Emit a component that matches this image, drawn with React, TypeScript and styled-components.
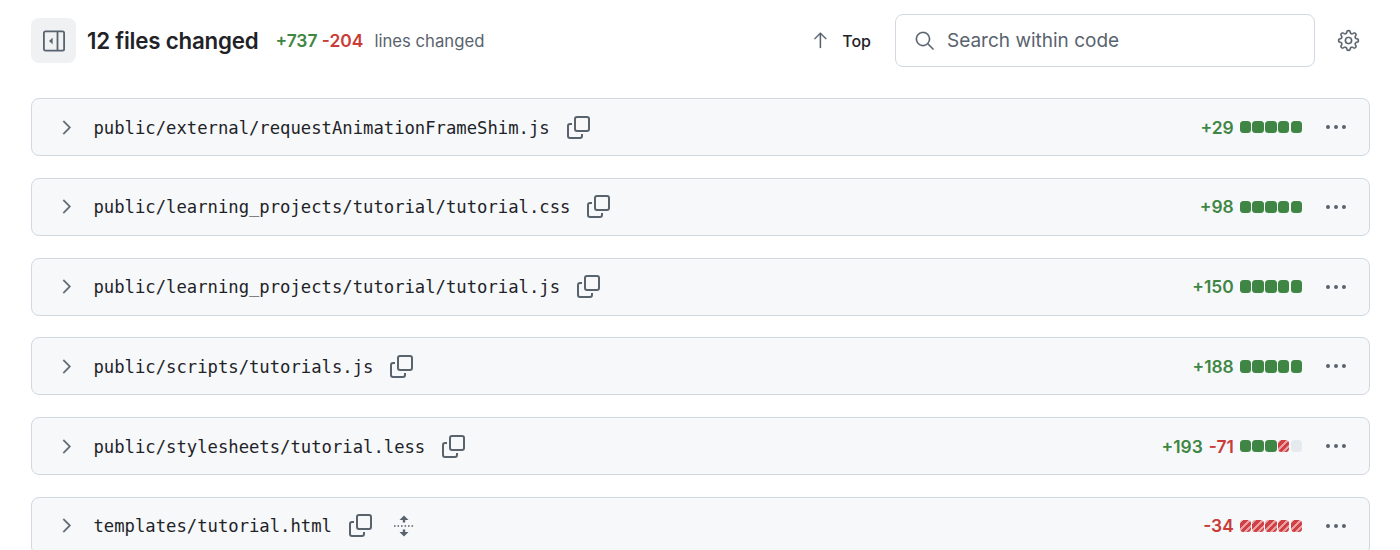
import React from "react"
import styled, { createGlobalStyle } from "styled-components"
import {
  GoArrowUp,
  GoChevronRight,
  GoGear,
  GoKebabHorizontal,
  GoSearch,
} from "react-icons/go"

type BlockKind = "add" | "del" | "none"

interface FileEntry {
  path: string
  added?: number
  removed?: number
  blocks: BlockKind[]
  movable?: boolean
}

const files: FileEntry[] = [
  {
    path: "public/external/requestAnimationFrameShim.js",
    added: 29,
    blocks: ["add", "add", "add", "add", "add"],
  },
  {
    path: "public/learning_projects/tutorial/tutorial.css",
    added: 98,
    blocks: ["add", "add", "add", "add", "add"],
  },
  {
    path: "public/learning_projects/tutorial/tutorial.js",
    added: 150,
    blocks: ["add", "add", "add", "add", "add"],
  },
  {
    path: "public/scripts/tutorials.js",
    added: 188,
    blocks: ["add", "add", "add", "add", "add"],
  },
  {
    path: "public/stylesheets/tutorial.less",
    added: 193,
    removed: 71,
    blocks: ["add", "add", "add", "del", "none"],
  },
  {
    path: "templates/tutorial.html",
    removed: 34,
    blocks: ["del", "del", "del", "del", "del"],
    movable: true,
  },
]

const SidebarGlyph = () => (
  <svg width="24" height="24" viewBox="0 0 24 24" fill="none">
    <rect x="1.9" y="2.4" width="20.2" height="19.2" rx="1.6" stroke="currentColor" strokeWidth="1.8" />
    <path d="M15.5 2.4v19.2" stroke="currentColor" strokeWidth="1.8" />
    <path d="M10.6 8.8v6.4L7 12z" fill="currentColor" />
  </svg>
)

const CopyGlyph = () => (
  <svg width="23" height="23" viewBox="0 0 23 23" fill="none" stroke="currentColor" strokeWidth="2">
    <rect x="8" y="1" width="14" height="14" rx="2" />
    <path d="M5 8H3a2 2 0 0 0-2 2v10a2 2 0 0 0 2 2h10a2 2 0 0 0 2-2v-2" />
  </svg>
)

const MoveGlyph = () => (
  <svg width="20" height="22" viewBox="0 0 20 22" fill="currentColor">
    <path d="M10 0.5 14.5 5H11.2v2.5H8.8V5H5.5z" />
    <path d="M10 21.5 14.5 17H11.2v-2.5H8.8V17H5.5z" />
    <path d="M0 11h20" fill="none" stroke="currentColor" strokeWidth="1.6" strokeDasharray="1.6 1.9" />
  </svg>
)

const App: React.FunctionComponent = () => {
  return (
    <>
      <GlobalStyle />
      <Page>
        <Toolbar>
          <SidebarButton>
            <SidebarGlyph />
          </SidebarButton>
          <Title>12 files changed</Title>
          <Totals>
            <Added>+737</Added> <Removed>-204</Removed>
          </Totals>
          <TotalsLabel>lines changed</TotalsLabel>
          <TopLink>
            <GoArrowUp size={21} />
            <span>Top</span>
          </TopLink>
          <SearchBox>
            <GoSearch size={21} />
            <span>Search within code</span>
          </SearchBox>
          <SettingsIcon>
            <GoGear size={23} />
          </SettingsIcon>
        </Toolbar>
        <FileList>
          {files.map((file) => (
            <FileRow key={file.path}>
              <Chevron>
                <GoChevronRight size={23} />
              </Chevron>
              <FilePath>{file.path}</FilePath>
              <CopyIcon>
                <CopyGlyph />
              </CopyIcon>
              {file.movable && (
                <MoveIcon>
                  <MoveGlyph />
                </MoveIcon>
              )}
              <Stats>
                {file.added !== undefined && <Added>+{file.added}</Added>}
                {file.removed !== undefined && <Removed>-{file.removed}</Removed>}
              </Stats>
              <Blocks>
                {file.blocks.map((kind, index) => (
                  <Block key={index} $kind={kind} />
                ))}
              </Blocks>
              <MoreIcon>
                <GoKebabHorizontal size={24} />
              </MoreIcon>
            </FileRow>
          ))}
        </FileList>
      </Page>
    </>
  )
}

const GlobalStyle = createGlobalStyle`
  html, body {
    margin: 0;
    background: #ffffff;
    font-family: Inter, "Liberation Sans", sans-serif;
    overflow: hidden;
  }
`

const Page = styled.div`
  width: 1400px;
  height: 550px;
  box-sizing: border-box;
  padding: 14px 30px 0 31px;
  overflow: hidden;
`

const Toolbar = styled.div`
  display: flex;
  align-items: center;
  height: 53px;
  padding-right: 10px;
`

const SidebarButton = styled.div`
  width: 45px;
  height: 45px;
  border-radius: 8px;
  background: #eff1f3;
  color: #59636e;
  display: flex;
  align-items: center;
  justify-content: center;
  margin-right: 11px;
`

const Title = styled.div`
  font-size: 22.3px;
  font-weight: 600;
  color: #1f2328;
  letter-spacing: -0.2px;
  margin-right: 17px;
`

const Totals = styled.div`
  font-size: 17.4px;
  font-weight: 600;
  margin-right: 11px;
`

const TotalsLabel = styled.div`
  font-size: 16.7px;
  color: #59636e;
`

const TopLink = styled.div`
  display: flex;
  align-items: center;
  gap: 11px;
  margin-left: auto;
  margin-right: 24px;
  font-size: 16px;
  font-weight: 500;
  color: #1f2328;

  svg {
    color: #59636e;
    stroke: currentColor;
    stroke-width: 0.25px;
  }
`

const SearchBox = styled.div`
  width: 420px;
  height: 53px;
  box-sizing: border-box;
  border: 1.5px solid #d1d9e0;
  border-radius: 8px;
  display: flex;
  align-items: center;
  gap: 12px;
  padding-left: 18px;
  font-size: 19px;
  color: #59636e;

  svg {
    stroke: currentColor;
    stroke-width: 0.25px;
  }
`

const SettingsIcon = styled.div`
  display: flex;
  color: #59636e;
  margin-left: 22px;

  svg {
    stroke: currentColor;
    stroke-width: 0.2px;
  }
`

const FileList = styled.div`
  display: flex;
  flex-direction: column;
  gap: 21.8px;
  margin-top: 31px;
`

const FileRow = styled.div`
  height: 58px;
  flex: none;
  box-sizing: border-box;
  border: 1.5px solid #d1d9e0;
  border-radius: 8px;
  background: #f6f8fa;
  display: flex;
  align-items: center;
  padding: 0 21px 0 23px;
`

const Chevron = styled.span`
  display: flex;
  color: #59636e;
  margin-right: 15.5px;

  svg {
    stroke: currentColor;
    stroke-width: 0.4px;
  }
`

const FilePath = styled.span`
  font-family: "DejaVu Sans Mono", "Liberation Mono", monospace;
  font-size: 17.23px;
  color: #1f2328;
  margin-right: 17px;
  position: relative;
  top: 0.5px;
`

const CopyIcon = styled.span`
  display: flex;
  color: #59636e;
`

const MoveIcon = styled.span`
  display: flex;
  color: #59636e;
  margin-left: 22px;
`

const Stats = styled.span`
  display: flex;
  gap: 6px;
  margin-left: auto;
  margin-right: 6px;
  font-size: 17.4px;
  font-weight: 600;
`

const Added = styled.span`
  color: #3f8644;
`

const Removed = styled.span`
  color: #c93c37;
`

const Blocks = styled.span`
  display: flex;
  gap: 1.2px;
  margin-right: 22px;
`

const blockBackground: Record<BlockKind, string> = {
  add: "#3f8644",
  del: "repeating-linear-gradient(-45deg, #cf3f44 0 3.2px, #e8a0a2 3.2px 5.2px)",
  none: "#e6eaef",
}

const Block = styled.span<{ $kind: BlockKind }>`
  width: 11.5px;
  height: 12.5px;
  border-radius: 3.5px;
  background: ${(p) => blockBackground[p.$kind]};
`

const MoreIcon = styled.span`
  display: flex;
  color: #59636e;
`

export default App
